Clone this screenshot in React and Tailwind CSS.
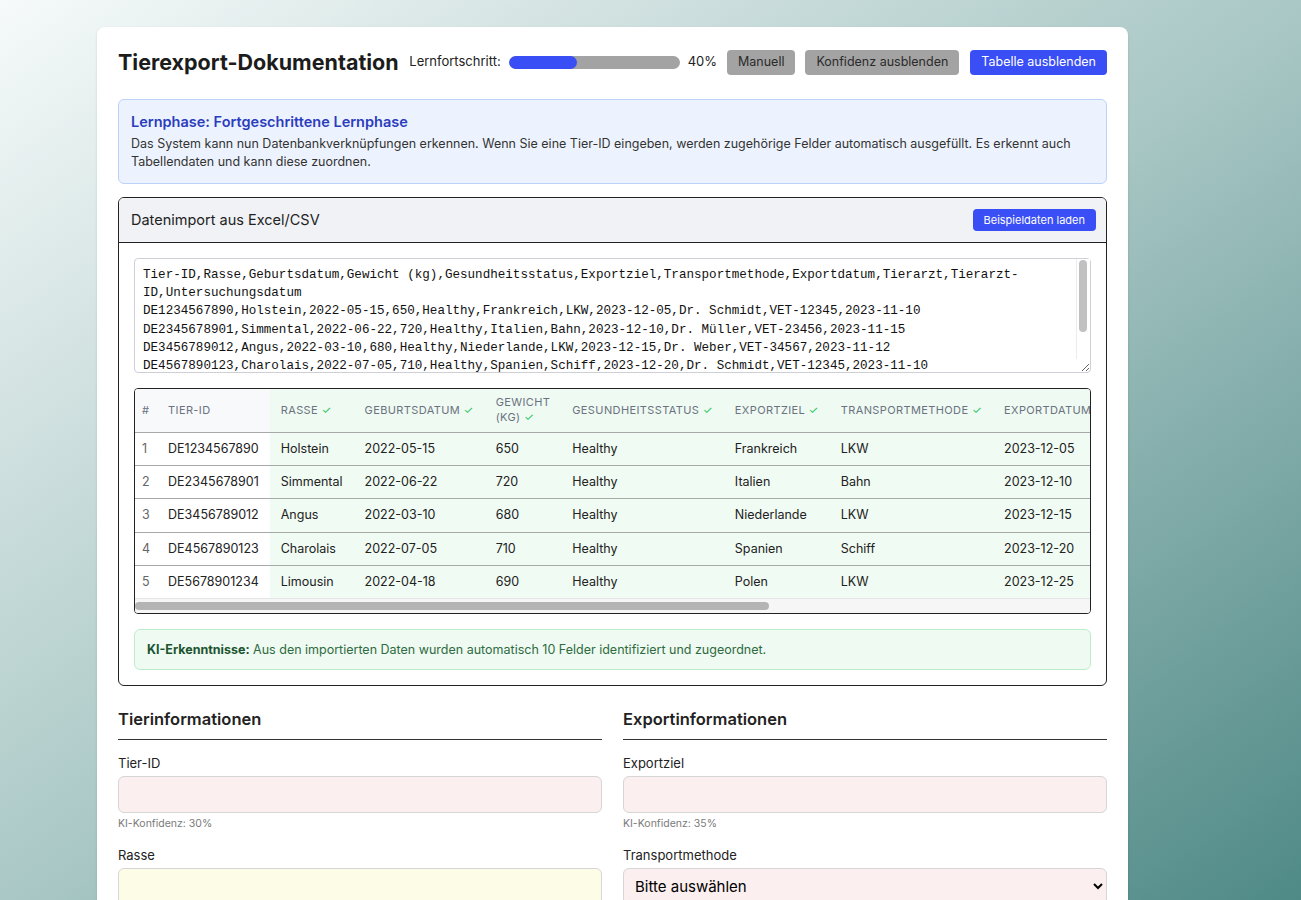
import React, { useState } from "react";

const columns = [
  "Tier-ID",
  "Rasse",
  "Geburtsdatum",
  "Gewicht (kg)",
  "Gesundheitsstatus",
  "Exportziel",
  "Transportmethode",
  "Exportdatum",
  "Tierarzt",
  "Tierarzt-ID",
  "Untersuchungsdatum",
];

const rows = [
  ["DE1234567890", "Holstein", "2022-05-15", "650", "Healthy", "Frankreich", "LKW", "2023-12-05", "Dr. Schmidt", "VET-12345", "2023-11-10"],
  ["DE2345678901", "Simmental", "2022-06-22", "720", "Healthy", "Italien", "Bahn", "2023-12-10", "Dr. Müller", "VET-23456", "2023-11-15"],
  ["DE3456789012", "Angus", "2022-03-10", "680", "Healthy", "Niederlande", "LKW", "2023-12-15", "Dr. Weber", "VET-34567", "2023-11-12"],
  ["DE4567890123", "Charolais", "2022-07-05", "710", "Healthy", "Spanien", "Schiff", "2023-12-20", "Dr. Schmidt", "VET-12345", "2023-11-10"],
  ["DE5678901234", "Limousin", "2022-04-18", "690", "Healthy", "Polen", "LKW", "2023-12-25", "Dr. Müller", "VET-23456", "2023-11-20"],
];

const csvText = [columns.join(","), ...rows.map((r) => r.join(","))].join("\n");

function Field({ label, bg, confidence, select }) {
  return (
    <div className="mb-[15px]">
      <label className="block text-[13px] leading-[18px] text-[#222] mb-1">{label}</label>
      {select ? (
        <select
          className={`w-full h-[37px] rounded-md border border-[#d6d6d6] px-[7px] text-[15px] text-black ${bg}`}
          defaultValue=""
        >
          <option value="">Bitte auswählen</option>
          <option>LKW</option>
          <option>Bahn</option>
          <option>Schiff</option>
        </select>
      ) : (
        <input
          type="text"
          className={`w-full h-[37px] rounded-md border border-[#d6d6d6] px-2 text-[14px] ${bg}`}
        />
      )}
      {confidence && (
        <div className="mt-[4px] text-[10.5px] leading-[14px] text-[#7a7a7a]">
          KI-Konfidenz: {confidence}
        </div>
      )}
    </div>
  );
}

export default function App() {
  const [csv, setCsv] = useState(csvText);

  return (
    <div className="min-h-screen bg-fixed bg-gradient-to-br from-[#f6fafa] via-[#aac8c6] to-[#4f8a87] font-['Inter',sans-serif] pt-[27px] pb-10">
      <div className="ml-[97px] w-[1031px] rounded-lg bg-white px-[21px] pt-[21px] pb-6 shadow-sm">
        {/* header */}
        <div className="flex items-center justify-between">
          <h1 className="text-[21.5px] font-bold text-[#1c1c1c] leading-7">Tierexport-Dokumentation</h1>
          <div className="flex items-center text-[13px] text-[#222]">
            <span>Lernfortschritt:</span>
            <div className="ml-2 h-[13px] w-[171px] rounded-full bg-[#a3a3a3] overflow-hidden">
              <div className="h-full rounded-full bg-[#3a4ef6]" style={{ width: "40%" }} />
            </div>
            <span className="ml-2">40%</span>
            <button className="ml-[10px] h-[25px] rounded px-[11px] bg-[#a3a3a3] text-[#2b2b2b] text-[12.5px]">Manuell</button>
            <button className="ml-[10px] h-[25px] rounded px-[11px] bg-[#a3a3a3] text-[#2b2b2b] text-[12.5px]">Konfidenz ausblenden</button>
            <button className="ml-[11px] h-[25px] rounded px-[11px] bg-[#3a4ef6] text-white text-[12.5px]">Tabelle ausblenden</button>
          </div>
        </div>

        {/* learning phase */}
        <div className="mt-[23px] rounded-md border border-[#bcd2fb] bg-[#edf3fe] px-3 py-[12px]">
          <h2 className="text-[14.5px] font-semibold text-[#2b3dbd] leading-5">
            Lernphase: Fortgeschrittene Lernphase
          </h2>
          <p className="mt-[3px] text-[12.5px] leading-[18px] text-[#333]">
            Das System kann nun Datenbankverknüpfungen erkennen. Wenn Sie eine Tier-ID eingeben, werden zugehörige Felder automatisch ausgefüllt. Es erkennt auch Tabellendaten und kann diese zuordnen.
          </p>
        </div>

        {/* import */}
        <div className="mt-[13px] rounded-md border border-[#222] overflow-hidden">
          <div className="flex items-center justify-between h-[45px] bg-[#f1f2f6] border-b border-[#222] pl-3 pr-[10px]">
            <span className="text-[14.5px] text-[#222]">Datenimport aus Excel/CSV</span>
            <button className="h-[22px] rounded px-[11px] bg-[#3a4ef6] text-white text-[11px]">Beispieldaten laden</button>
          </div>
          <div className="p-[15px] flex flex-col gap-[15px]">
            <div className="relative">
              <textarea
                value={csv}
                onChange={(e) => setCsv(e.target.value)}
                className="block h-[115px] w-full rounded border border-[#cfcfd6] pl-2 pr-[22px] pt-[7px] font-['Liberation_Mono',monospace] text-[12.58px] leading-[18.2px] text-[#111] resize-y"
              />
              {/* scrollbar */}
              <div className="absolute right-[1px] top-[1px] bottom-[14px] w-[14px] border-l border-[#ececec] bg-white">
                <div className="ml-[2px] mt-[1px] h-[72px] w-[8px] rounded-full bg-[#c1c1c1]" />
              </div>
            </div>

            <div className="rounded border border-[#222] overflow-hidden">
              <div className="overflow-x-auto">
                <table className="border-collapse text-left">
                  <thead>
                    <tr className="border-b border-[#a8a8a8]">
                      <th className="bg-[#f8f9fb] px-[7px] h-[43px] py-0 text-[11px] font-normal text-[#6b7280]">#</th>
                      {columns.map((c, i) => (
                        <th
                          key={c}
                          className={`px-[11px] h-[43px] py-0 text-[11px] leading-[15px] font-normal uppercase tracking-[0.035em] text-[#6b7280] whitespace-nowrap ${i === 0 ? "bg-[#f8f9fb]" : "bg-[#effaf2]"}`}
                        >
                          {c === "Gewicht (kg)" ? (
                            <>
                              Gewicht
                              <br />
                              (kg) <span className="text-[#22c55e]">✓</span>
                            </>
                          ) : (
                            <>
                              {c}
                              {i > 0 && <span className="text-[#22c55e]"> ✓</span>}
                            </>
                          )}
                        </th>
                      ))}
                    </tr>
                  </thead>
                  <tbody>
                    {rows.map((r, ri) => (
                      <tr key={r[0]} className="border-b border-[#a8a8a8] last:border-[#e5e5e5]">
                        <td className="px-[7px] py-[6.2px] text-[12.5px] leading-5 text-[#666] bg-white">{ri + 1}</td>
                        {r.map((v, i) => (
                          <td
                            key={i}
                            className={`px-[11px] py-[6.2px] text-[12.5px] leading-5 text-[#222] whitespace-nowrap ${i === 0 ? "bg-white" : "bg-[#f0fbf3]"}`}
                          >
                            {v}
                          </td>
                        ))}
                      </tr>
                    ))}
                  </tbody>
                </table>
              </div>
              {/* horizontal scrollbar */}
              <div className="h-[14px] bg-[#f6f6f6] pt-[3px]">
                <div className="h-[8px] w-[634px] rounded-full bg-[#b4b4b4]" />
              </div>
            </div>

            <div className="rounded-md border border-[#bdeccb] bg-[#effaf2] px-3 py-[11px] text-[12.5px] leading-[17px] text-[#2e6b40]">
              <span className="font-bold text-[#1b5430]">KI-Erkenntnisse:</span> Aus den importierten Daten wurden automatisch 10 Felder identifiziert und zugeordnet.
            </div>
          </div>
        </div>

        {/* form */}
        <div className="mt-[21px] grid grid-cols-2 gap-[21px]">
          <div>
            <h3 className="text-[16.5px] font-semibold text-[#222] leading-6 pb-[8px] border-b border-[#333] mb-[14px]">Tierinformationen</h3>
            <Field label="Tier-ID" bg="bg-[#fbefef]" confidence="30%" />
            <Field label="Rasse" bg="bg-[#fdfde7]" confidence="55%" />
            <Field label="Geburtsdatum" bg="bg-[#fdfde7]" confidence="60%" />
            <Field label="Gewicht (kg)" bg="bg-[#fdfde7]" confidence="50%" />
          </div>
          <div>
            <h3 className="text-[16.5px] font-semibold text-[#222] leading-6 pb-[8px] border-b border-[#333] mb-[14px]">Exportinformationen</h3>
            <Field label="Exportziel" bg="bg-[#fbefef]" confidence="35%" />
            <Field label="Transportmethode" bg="bg-[#fbefef]" select />
            <Field label="Exportdatum" bg="bg-[#fdfde7]" confidence="50%" />
            <Field label="Tierarzt" bg="bg-[#fdfde7]" confidence="45%" />
          </div>
        </div>
      </div>
    </div>
  );
}
